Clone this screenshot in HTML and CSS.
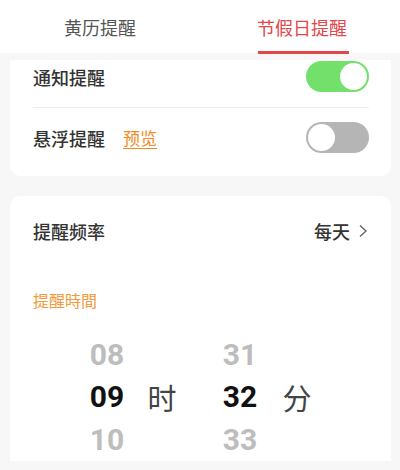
FILE: index.html
```html
<!DOCTYPE html>
<html lang="zh-CN">
<head>
<meta charset="utf-8">
<link rel="stylesheet" href="styles.css">
</head>
<body>
<div class="page">
  <header class="tabs">
    <div class="tab">黄历提醒</div>
    <div class="tab active">节假日提醒<span class="underline"></span></div>
  </header>
  <main class="content">
    <section class="card card-top">
      <div class="row row-first">
        <span class="label">通知提醒</span>
        <span class="switch on"><span class="knob"></span></span>
      </div>
      <div class="row row-second">
        <span class="label">悬浮提醒</span>
        <a class="preview">预览</a>
        <span class="switch off"><span class="knob"></span></span>
      </div>
    </section>
    <section class="card card-time">
      <div class="freq">
        <span class="label">提醒频率</span>
        <span class="value">每天
          <svg class="chev" width="10" height="14" viewBox="0 0 10 14"><path d="M2 1.5 L8 7 L2 12.5" fill="none" stroke="#666" stroke-width="1.4"/></svg>
        </span>
      </div>
      <div class="time-label">提醒時間</div>
      <div class="picker">
        <div class="col num">
          <span class="dim">08</span>
          <span class="cur">09</span>
          <span class="dim">10</span>
        </div>
        <div class="col unit u1">
          <span></span><span class="unit-text">时</span><span></span>
        </div>
        <div class="col num m">
          <span class="dim">31</span>
          <span class="cur">32</span>
          <span class="dim">33</span>
        </div>
        <div class="col unit u2">
          <span></span><span class="unit-text">分</span><span></span>
        </div>
      </div>
    </section>
  </main>
</div>
</body>
</html>
```
FILE: styles.css
```css
* { box-sizing: border-box; }
html, body { margin: 0; padding: 0; }
body {
  width: 400px;
  height: 470px;
  overflow: hidden;
  background: #f7f7f7;
  font-family: "Noto Sans CJK SC", "Noto Sans", sans-serif;
}
.page { display: flex; flex-direction: column; height: 470px; }
.tabs {
  height: 53px;
  background: #fff;
  display: flex;
}
.tab {
  position: relative;
  width: 200px;
  text-align: center;
  font-size: 18px;
  line-height: 20px;
  padding-top: 17px;
  color: #555;
}
.tab.active { color: #e2474a; padding-left: 4px; }
.underline {
  position: absolute;
  left: 58px;
  width: 91px;
  top: 51px;
  height: 3px;
  background: #e2474a;
}
.content { padding: 7px 9px 0 10px; display: flex; flex-direction: column; gap: 20px; }
.card {
  background: #fff;
  border-radius: 10px;
  padding: 0 22px 0 23px;
}
.card-top { border-radius: 0 0 10px 10px; padding-bottom: 8px; }
.row { display: flex; align-items: center; }
.row-first { padding-top: 1px; padding-bottom: 15px; border-bottom: 1px solid #efefef; }
.row-second { padding-top: 14px; padding-bottom: 15px; }
.label { font-size: 18px; color: #333; font-weight: 500; line-height: 24px; }
.preview {
  margin-left: 18px;
  font-size: 17px;
  color: #f28a1d;
  text-decoration: underline;
  text-underline-offset: 3px;
  line-height: 24px;
}
.switch {
  margin-left: auto;
  width: 63px;
  height: 31px;
  border-radius: 16px;
  display: flex;
  align-items: center;
  padding: 2px;
}
.switch.on { background: #72e06a; justify-content: flex-end; }
.switch.off { background: #b5b5b5; justify-content: flex-start; }
.knob { width: 27px; height: 27px; border-radius: 50%; background: #fff; }
.card-time { flex: 1; border-radius: 10px 10px 0 0; }
.freq { height: 70px; display: flex; align-items: center; justify-content: space-between; }
.value { display: flex; align-items: center; gap: 8px; font-size: 18px; color: #333; font-weight: 500; margin-right: 1px; }
.chev { display: block; }
.time-label { margin-top: 24px; font-size: 16px; line-height: 20px; color: #f39a3c; }
.picker { display: flex; margin-top: 23px; padding-left: 49px; }
.col { display: flex; flex-direction: column; }
.col span { height: 42.5px; display: flex; align-items: center; justify-content: center; }
.num { width: 50px; font-family: Roboto, "Liberation Sans", sans-serif; font-weight: 700; font-size: 30px; }
.dim { color: #bdbdbd; }
.cur { color: #111; }
.unit { width: 30px; }
.u1 { margin-left: 15px; }
.m { margin-left: 38px; }
.u2 { margin-left: 17px; }
.unit-text { font-size: 29px; color: #444; }
```
